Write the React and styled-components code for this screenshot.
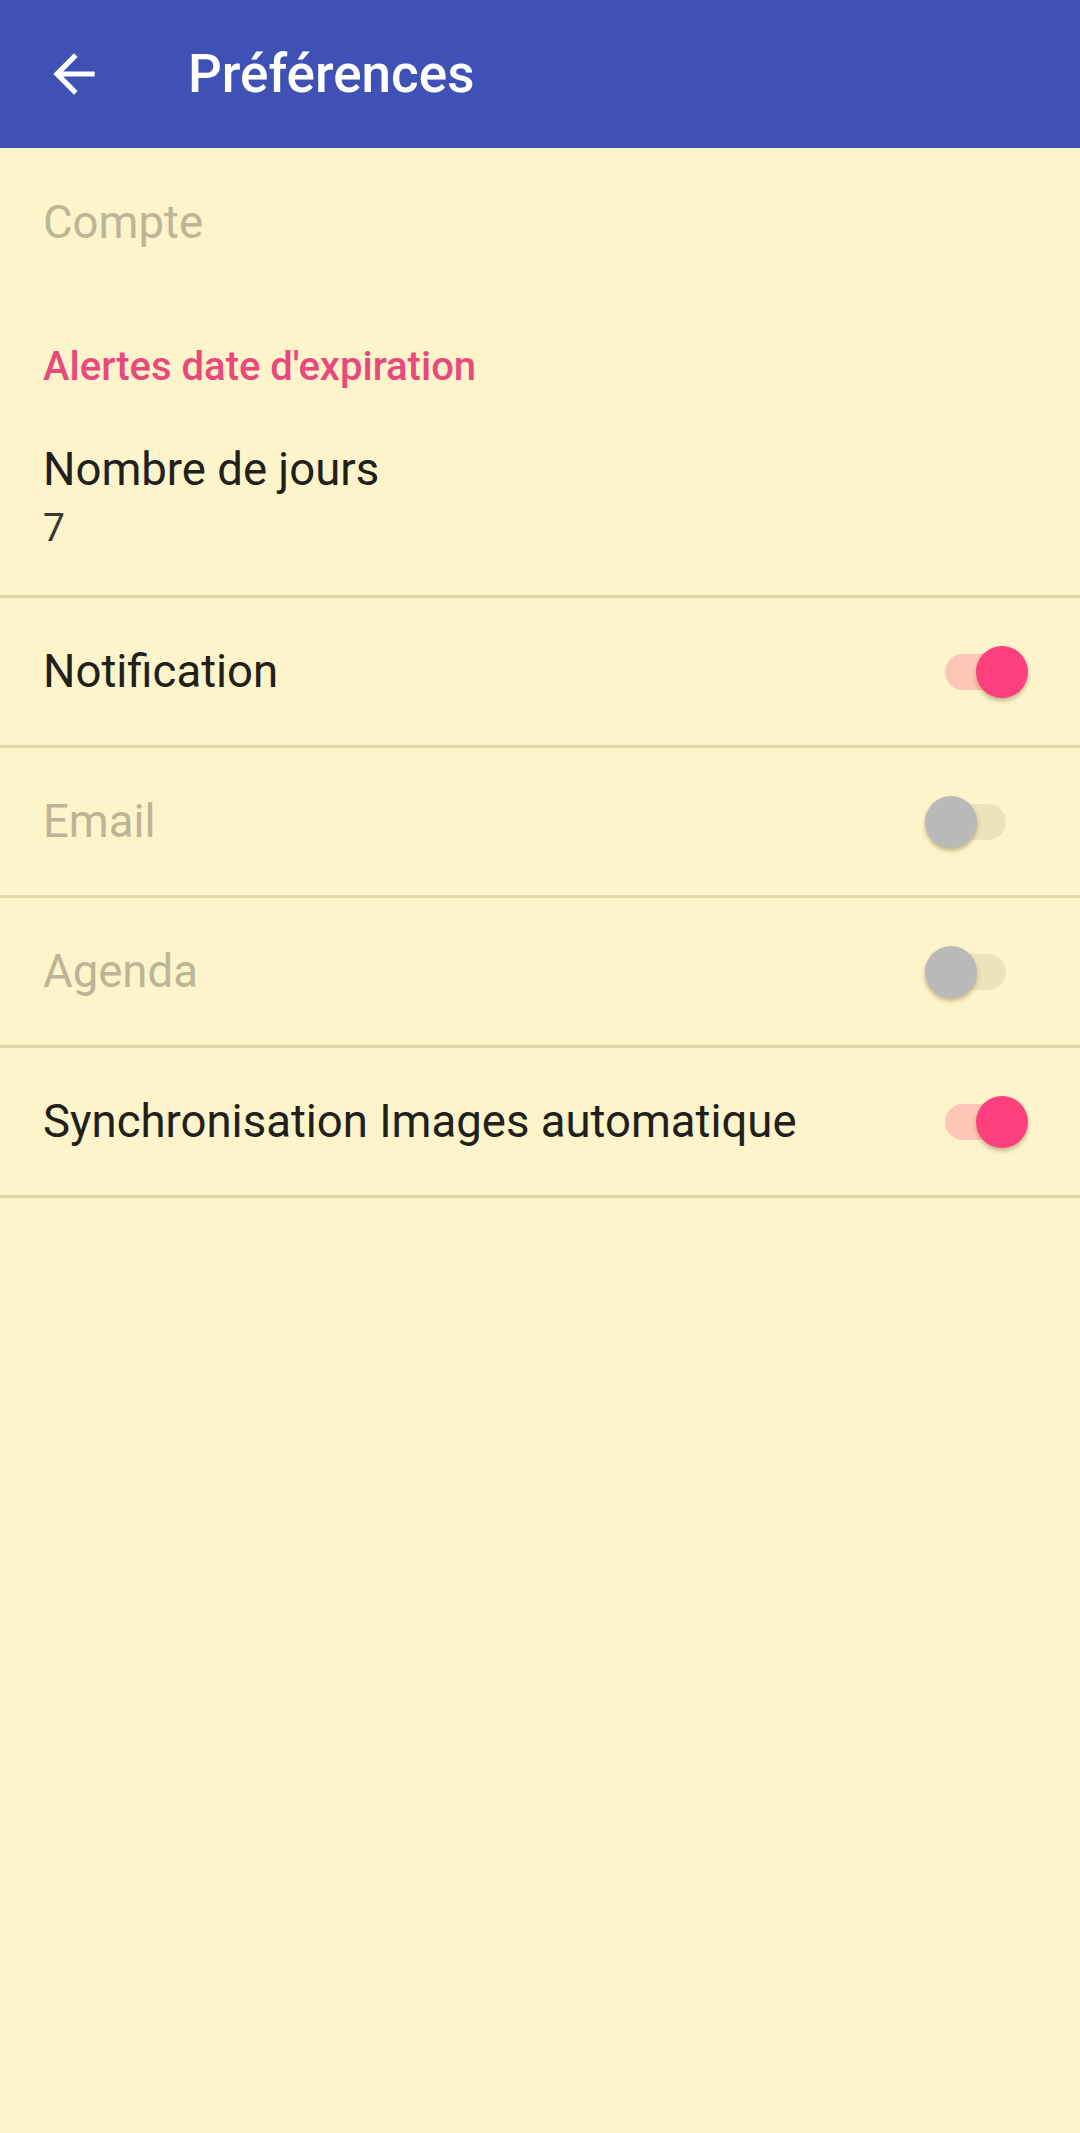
import React, { useState } from 'react';
import styled, { createGlobalStyle } from 'styled-components';

const GlobalStyle = createGlobalStyle`
  html, body {
    margin: 0;
    padding: 0;
    background: #fef4cb;
  }
  body {
    font-family: Roboto, 'Noto Sans', sans-serif;
  }
`;

const Page = styled.div`
  min-height: 100vh;
  background: #fef4cb;
`;

const Toolbar = styled.header`
  height: 148px;
  background: #3f51b5;
  display: flex;
  align-items: center;
  padding-left: 43px;
  box-sizing: border-box;
`;

const BackButton = styled.button`
  width: 62px;
  height: 62px;
  padding: 0;
  border: 0;
  background: transparent;
  display: flex;
  align-items: center;
  justify-content: center;
  cursor: pointer;
`;

const Title = styled.h1`
  margin: 0 0 0 83px;
  font-size: 53px;
  font-weight: 500;
  color: #ffffff;
  line-height: 1;
`;

const PlainItem = styled.div`
  height: 148px;
  padding: 0 43px;
  display: flex;
  align-items: center;
  font-size: 45.5px;
  color: ${({ disabled }) => (disabled ? '#bcb596' : '#21201a')};
`;

const Category = styled.div`
  padding: 49px 43px 31px;
  font-size: 40px;
  line-height: 44px;
  font-weight: 500;
  color: #e9487d;
`;

const DetailItem = styled.div`
  padding: 24px 43px 45px;
  display: flex;
  flex-direction: column;
  gap: 10px;
  border-bottom: 3px solid #dfd6aa;
`;

const ItemTitle = styled.div`
  font-size: 45.5px;
  line-height: 52px;
  color: #21201a;
`;

const ItemSummary = styled.div`
  font-size: 39px;
  line-height: 44px;
  color: #3b3a32;
`;

const SwitchRow = styled.div`
  height: 147px;
  padding: 0 52px 0 43px;
  display: flex;
  align-items: center;
  justify-content: space-between;
  border-bottom: 3px solid #dfd6aa;
`;

const RowLabel = styled.span`
  font-size: 45.5px;
  color: ${({ disabled }) => (disabled ? '#bcb596' : '#21201a')};
`;

const SwitchBox = styled.div`
  position: relative;
  width: 103px;
  height: 56px;
  cursor: ${({ disabled }) => (disabled ? 'default' : 'pointer')};
`;

const Track = styled.div`
  position: absolute;
  left: 20px;
  right: 22px;
  top: 10px;
  height: 36px;
  border-radius: 18px;
  background: ${({ on }) => (on ? '#fec6b6' : '#ede3bb')};
`;

const Thumb = styled.div`
  position: absolute;
  top: 2px;
  left: ${({ on }) => (on ? '51px' : '0')};
  width: 52px;
  height: 52px;
  border-radius: 50%;
  background: ${({ on }) => (on ? '#fe3f7e' : '#bababa')};
  box-shadow: 0 3px 4px rgba(90, 70, 20, 0.35);
`;

const Switch = ({ on, disabled, onToggle }) => (
  <SwitchBox disabled={disabled} onClick={disabled ? undefined : onToggle}>
    <Track on={on ? 1 : 0} />
    <Thumb on={on ? 1 : 0} />
  </SwitchBox>
);

const BackArrow = () => (
  <svg width="62" height="62" viewBox="0 0 24 24">
    <path fill="#ffffff" d="M20 11H7.83l5.59-5.59L12 4l-8 8 8 8 1.41-1.41L7.83 13H20v-2z" />
  </svg>
);

const App = () => {
  const [switches, setSwitches] = useState({
    notification: true,
    email: false,
    agenda: false,
    sync: true,
  });

  const toggle = key => setSwitches(prev => ({ ...prev, [key]: !prev[key] }));

  const rows = [
    { key: 'notification', label: 'Notification', disabled: false },
    { key: 'email', label: 'Email', disabled: true },
    { key: 'agenda', label: 'Agenda', disabled: true },
    { key: 'sync', label: 'Synchronisation Images automatique', disabled: false },
  ];

  return (
    <Page>
      <GlobalStyle />
      <Toolbar>
        <BackButton aria-label="Retour">
          <BackArrow />
        </BackButton>
        <Title>Préférences</Title>
      </Toolbar>
      <PlainItem disabled>Compte</PlainItem>
      <Category>Alertes date d'expiration</Category>
      <DetailItem>
        <ItemTitle>Nombre de jours</ItemTitle>
        <ItemSummary>7</ItemSummary>
      </DetailItem>
      {rows.map(row => (
        <SwitchRow key={row.key}>
          <RowLabel disabled={row.disabled}>{row.label}</RowLabel>
          <Switch on={switches[row.key]} disabled={row.disabled} onToggle={() => toggle(row.key)} />
        </SwitchRow>
      ))}
    </Page>
  );
};

export default App;
